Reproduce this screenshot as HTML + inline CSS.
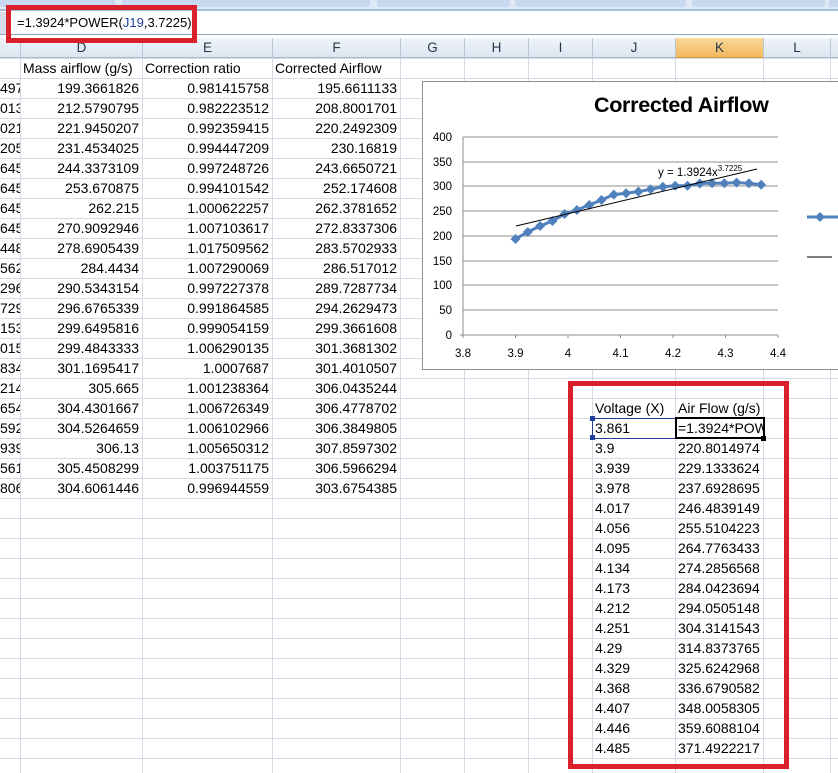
<!DOCTYPE html>
<html><head><meta charset="utf-8"><style>
*{margin:0;padding:0;box-sizing:border-box}
body{width:838px;height:773px;overflow:hidden;background:#fff;position:relative;font-family:"Liberation Sans",sans-serif;font-size:14px;color:#000}
.a{position:absolute;white-space:nowrap}
.grid{position:absolute;left:0;top:58px;width:838px;height:715px;
background-image:repeating-linear-gradient(to bottom,#d4dbe6 0,#d4dbe6 1px,transparent 1px,transparent 20px)}
.v{position:absolute;top:38px;width:1px;height:735px;background:#d4dbe6}
.hdr{position:absolute;top:38px;height:20px;background:linear-gradient(#f0f4fa,#dde5f0);border-right:1px solid #b9c6d8;border-bottom:1px solid #a9b8cc;text-align:center;line-height:20px;color:#27364c;font-size:13.5px}
.c{position:absolute;height:20px;line-height:21px;white-space:nowrap;overflow:hidden}
.r{text-align:right;padding-right:3px}
.l{padding-left:3px}
.red{position:absolute;border:5px solid #d9202c;z-index:10}
</style></head><body>
<div class="a" style="left:0;top:0;width:838px;height:11px;background:#dfe9f5;border-bottom:2px solid #a6bcd8"></div>
<div class="a" style="left:0;top:0;width:115px;height:7px;background:#c6d9f0;border-radius:0 0 3px 3px"></div>
<div class="a" style="left:122px;top:0;width:248px;height:7px;background:#c6d9f0;border-radius:0 0 3px 3px"></div>
<div class="a" style="left:377px;top:0;width:133px;height:7px;background:#c6d9f0;border-radius:0 0 3px 3px"></div>
<div class="a" style="left:515px;top:0;width:171px;height:7px;background:#c6d9f0;border-radius:0 0 3px 3px"></div>
<div class="a" style="left:692px;top:0;width:133px;height:7px;background:#c6d9f0;border-radius:0 0 3px 3px"></div>
<div class="a" style="left:829px;top:0;width:20px;height:7px;background:#c6d9f0"></div>
<div class="a" style="left:0;top:12px;width:838px;height:23px;background:#fff;border-bottom:1px solid #8ea3be"></div>
<div class="a" style="left:0;top:12px;width:8px;height:22px;background:#d5deea"></div>
<div class="a" style="left:17px;top:14px;font-size:13px;line-height:18px">=1.3924*POWER(<span style="color:#1f3fa0">J19</span>,3.7225)<span style="display:inline-block;width:1px;height:15px;background:#000;vertical-align:middle"></span></div>
<div class="red" style="left:6px;top:5px;width:191px;height:38px"></div>
<div class="grid"></div>
<div class="v" style="left:20px"></div><div class="v" style="left:142px"></div><div class="v" style="left:272px"></div><div class="v" style="left:400px"></div><div class="v" style="left:464px"></div><div class="v" style="left:528px"></div><div class="v" style="left:592px"></div><div class="v" style="left:675px"></div><div class="v" style="left:763px"></div><div class="v" style="left:830px"></div>
<div class="hdr" style="left:0;width:21px"></div>
<div class="hdr" style="left:21px;width:122px">D</div>
<div class="hdr" style="left:143px;width:130px">E</div>
<div class="hdr" style="left:273px;width:128px">F</div>
<div class="hdr" style="left:401px;width:64px">G</div>
<div class="hdr" style="left:465px;width:64px">H</div>
<div class="hdr" style="left:529px;width:64px">I</div>
<div class="hdr" style="left:593px;width:83px">J</div>
<div class="hdr" style="left:676px;width:88px;background:linear-gradient(#f9d99b,#f3b85c);border-bottom-color:#d49a3c">K</div>
<div class="hdr" style="left:764px;width:67px">L</div>
<div class="hdr" style="left:831px;width:10px"></div>
<div class="c l" style="left:20px;top:58px">Mass airflow (g/s)</div>
<div class="c l" style="left:142px;top:58px">Correction ratio</div>
<div class="c l" style="left:272px;top:58px">Corrected Airflow</div>
<div id="data"></div>
<div class="a" style="left:422px;top:81px;width:420px;height:289px;background:#fff;border:1px solid #8c8c8c"></div>
<div class="a" style="left:594px;top:93px;font-size:21.5px;font-weight:bold;letter-spacing:-0.3px">Corrected Airflow</div>
<svg class="a" style="left:0;top:0" width="838" height="773" viewBox="0 0 838 773">
<g stroke="#8c8c8c" stroke-width="1">
<line x1="463" y1="137" x2="778" y2="137"/><line x1="463" y1="162" x2="778" y2="162"/><line x1="463" y1="186" x2="778" y2="186"/><line x1="463" y1="211" x2="778" y2="211"/><line x1="463" y1="236" x2="778" y2="236"/><line x1="463" y1="261" x2="778" y2="261"/><line x1="463" y1="285" x2="778" y2="285"/><line x1="463" y1="310" x2="778" y2="310"/><line x1="460" y1="335" x2="778" y2="335"/>
<line x1="463" y1="137" x2="463" y2="338"/>
<line x1="515.5" y1="335" x2="515.5" y2="338"/><line x1="568" y1="335" x2="568" y2="338"/><line x1="620.5" y1="335" x2="620.5" y2="338"/><line x1="673" y1="335" x2="673" y2="338"/><line x1="725.5" y1="335" x2="725.5" y2="338"/><line x1="778" y1="335" x2="778" y2="338"/>
</g>
<g font-family="Liberation Sans" font-size="11.5" fill="#000" text-anchor="end">
<text x="452" y="141">400</text><text x="452" y="166">350</text><text x="452" y="190">300</text><text x="452" y="215">250</text><text x="452" y="240">200</text><text x="452" y="265">150</text><text x="452" y="289">100</text><text x="452" y="314">50</text><text x="452" y="339">0</text>
</g>
<g font-family="Liberation Sans" font-size="11.5" fill="#000" text-anchor="middle">
<text x="463" y="357">3.8</text><text x="515.5" y="357">3.9</text><text x="568" y="357">4</text><text x="620.5" y="357">4.1</text><text x="673" y="357">4.2</text><text x="725.5" y="357">4.3</text><text x="778" y="357">4.4</text>
</g>
<polyline fill="none" stroke="#4f81bd" stroke-width="3" points="515.5,239 527.8,232 540.1,226 552.4,221 564.6,214 576.9,210 589.2,205 601.5,200 613.8,194.6 626.1,193.2 638.4,191.6 650.6,189.3 662.9,186.8 675.2,185.8 687.5,185.8 699.8,183.5 712.1,183.3 724.3,183.3 736.6,182.6 748.9,183.2 761.2,184.7"/>
<g fill="#4f81bd" id="dm"></g>
<line x1="516" y1="226" x2="757" y2="169" stroke="#000" stroke-width="1"/>
<text x="658" y="176" font-family="Liberation Sans" font-size="11.5">y = 1.3924x<tspan font-size="8" dy="-5">3.7225</tspan></text>
<line x1="807" y1="217" x2="838" y2="217" stroke="#4f81bd" stroke-width="3"/>
<path d="M820 212 L825 217 L820 222 L815 217Z" fill="#4f81bd"/>
<line x1="807" y1="257" x2="832" y2="257" stroke="#000" stroke-width="1"/>
</svg>
<div class="c l" style="left:592px;top:398px">Voltage (X)</div>
<div class="c l" style="left:675px;top:398px">Air Flow (g/s)</div>
<div class="a" style="left:592px;top:418px;width:84px;height:21px;border:1px solid #1f3f9a"></div>
<div class="a" style="left:590px;top:416px;width:5px;height:5px;background:#1f3f9a"></div>
<div class="a" style="left:590px;top:435px;width:5px;height:5px;background:#1f3f9a"></div>
<div class="a" style="left:675px;top:417px;width:90px;height:22px;border:2px solid #000"></div>
<div class="a" style="left:761px;top:436px;width:5px;height:5px;background:#000"></div>
<div id="jk"></div>
<div class="red" style="left:568px;top:381px;width:221px;height:388px"></div>
<script>
var L=["497","013","021","205","645","645","645","645","448","562","296","729","153","015","834","214","654","592","939","561","806"];
var D=["199.3661826","212.5790795","221.9450207","231.4534025","244.3373109","253.670875","262.215","270.9092946","278.6905439","284.4434","290.5343154","296.6765339","299.6495816","299.4843333","301.1695417","305.665","304.4301667","304.5264659","306.13","305.4508299","304.6061446"];
var E=["0.981415758","0.982223512","0.992359415","0.994447209","0.997248726","0.994101542","1.000622257","1.007103617","1.017509562","1.007290069","0.997227378","0.991864585","0.999054159","1.006290135","1.0007687","1.001238364","1.006726349","1.006102966","1.005650312","1.003751175","0.996944559"];
var F=["195.6611133","208.8001701","220.2492309","230.16819","243.6650721","252.174608","262.3781652","272.8337306","283.5702933","286.517012","289.7287734","294.2629473","299.3661608","301.3681302","301.4010507","306.0435244","306.4778702","306.3849805","307.8597302","306.5966294","303.6754385"];
var h="";for(var i=0;i<21;i++){var t=78+i*20;
h+='<div class="c r" style="left:0;width:20px;top:'+t+'px">'+L[i]+'</div><div class="c r" style="left:20px;width:122px;top:'+t+'px">'+D[i]+'</div><div class="c r" style="left:142px;width:130px;top:'+t+'px">'+E[i]+'</div><div class="c r" style="left:272px;width:128px;top:'+t+'px">'+F[i]+'</div>';}
document.getElementById("data").innerHTML=h;
var J=["3.861","3.9","3.939","3.978","4.017","4.056","4.095","4.134","4.173","4.212","4.251","4.29","4.329","4.368","4.407","4.446","4.485"];
var K=["=1.3924*POW","220.8014974","229.1333624","237.6928695","246.4839149","255.5104223","264.7763433","274.2856568","284.0423694","294.0505148","304.3141543","314.8373765","325.6242968","336.6790582","348.0058305","359.6088104","371.4922217"];
h="";for(i=0;i<17;i++){var t=418+i*20;h+='<div class="c l" style="left:592px;top:'+t+'px">'+J[i]+'</div><div class="c l" style="left:675px;width:88px;top:'+t+'px">'+K[i]+'</div>';}
document.getElementById("jk").innerHTML=h;
var pts=[[515.5,239],[527.8,232],[540.1,226],[552.4,221],[564.6,214],[576.9,210],[589.2,205],[601.5,200],[613.8,194.6],[626.1,193.2],[638.4,191.6],[650.6,189.3],[662.9,186.8],[675.2,185.8],[687.5,185.8],[699.8,183.5],[712.1,183.3],[724.3,183.3],[736.6,182.6],[748.9,183.2],[761.2,184.7]];
var s="";pts.forEach(function(p){s+='<path d="M'+p[0]+' '+(p[1]-5)+' L'+(p[0]+5)+' '+p[1]+' L'+p[0]+' '+(p[1]+5)+' L'+(p[0]-5)+' '+p[1]+'Z"/>';});
document.getElementById("dm").innerHTML=s;
</script>
</body></html>
